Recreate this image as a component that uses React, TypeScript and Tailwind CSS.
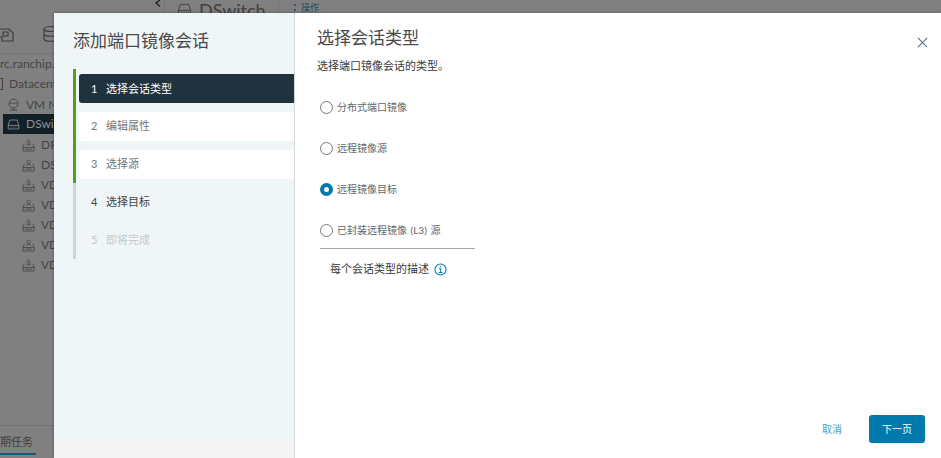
const FONT = "font-['Lato','Noto_Sans_CJK_SC',sans-serif]";

function SwitchIcon({ className }: { className?: string }) {
  return (
    <svg viewBox="0 0 16 16" fill="none" stroke="currentColor" strokeWidth="1" className={className} aria-hidden>
      <path d="M1.5 9 L3.5 2.5 H12.5 L14.5 9 V13.5 H1.5 Z" />
      <path d="M1.5 9 H14.5" />
      <path d="M4.5 11.2 H5.5 M7 11.2 H8 M9.5 11.2 H10.5 M12 11.2 H12.6" />
    </svg>
  );
}

function PortGroupIcon() {
  return (
    <svg viewBox="0 0 14 14" fill="none" stroke="currentColor" strokeWidth="0.9" className="h-[13px] w-[13px] shrink-0" aria-hidden>
      <circle cx="7" cy="3" r="1.8" />
      <path d="M4.5 7 C4.5 5.5 9.5 5.5 9.5 7" />
      <path d="M2.5 5 L1 9 V13 H13 V9 L11.5 5" />
      <path d="M1 9.2 H13 M3.5 11 H10.5" />
    </svg>
  );
}

function TreeRow({ label, selected, icon, indent }: { label: string; selected?: boolean; icon: React.ReactNode; indent: string }) {
  return (
    <div className={`flex h-5 items-center gap-[6px] text-[12px] whitespace-nowrap ${indent} ${selected ? "bg-[#132028] text-[#8b9296]" : "text-[#454545]"}`}>
      {icon}
      <span>{label}</span>
    </div>
  );
}

function Backdrop() {
  return (
    <div className="flex h-full w-full flex-col overflow-hidden bg-[#808080]">
      <div className="flex h-[15px] shrink-0">
        <div className="relative w-[165px] shrink-0 border-r border-[#767676]">
          <svg viewBox="0 0 8 8" fill="none" stroke="#222" strokeWidth="1.4" className="absolute top-0 left-[154px] h-2 w-2" aria-hidden>
            <path d="M6 0 L2 3 L6 6.5" />
          </svg>
        </div>
        <div className="flex w-[114px] shrink-0 items-center gap-[7px] border-r border-[#767676] pl-[12px] text-[#404040]">
          <SwitchIcon className="mt-1 h-[15px] w-[15px] shrink-0" />
          <span className="mt-1 text-[18px] leading-none">DSwitch</span>
        </div>
        <div className="flex items-center pl-[15px] text-[9px] text-[#1f4e66]">
          <div className="flex w-[7px] flex-col gap-[3px]">
            <span className="h-[2px] w-[2px] rounded-full bg-[#1f4e66]" />
            <span className="h-[2px] w-[2px] rounded-full bg-[#1f4e66]" />
          </div>
          <span>操作</span>
        </div>
      </div>
      <div className="flex h-[39px] w-[165px] shrink-0 items-center gap-[27px] border-b border-[#767676] text-[#3c3c3c]">
        <svg viewBox="0 0 18 18" fill="none" stroke="currentColor" strokeWidth="1.2" className="-ml-[3px] h-[18px] w-[18px] shrink-0" aria-hidden>
          <path d="M1 4 H12 L16 8 V16 H5 V12 H1 Z" />
          <path d="M6 7 H11 V11 H6 Z" />
        </svg>
        <svg viewBox="0 0 18 18" fill="none" stroke="currentColor" strokeWidth="1.2" className="h-[18px] w-[18px] shrink-0" aria-hidden>
          <ellipse cx="9" cy="4" rx="7" ry="2.5" />
          <path d="M2 4 V14 C2 17 16 17 16 14 V4 M2 9 C2 12 16 12 16 9" />
        </svg>
      </div>
      <div className="flex min-h-0 flex-1 flex-col">
        <div className="flex h-5 items-center text-[12px] whitespace-nowrap text-[#454545]">rc.ranchip.com</div>
        <TreeRow indent="" label="Datacenter" icon={<span className="h-3 w-[3px] shrink-0 border border-l-0 border-[#444]" />} />
        <TreeRow indent="pl-[7px] pt-[1px]" label="VM Network" icon={
          <svg viewBox="0 0 14 14" fill="none" stroke="currentColor" strokeWidth="1" className="h-[13px] w-[13px] shrink-0" aria-hidden>
            <circle cx="7" cy="6" r="4.8" />
            <path d="M2.5 5 C5 7 9 4 11.5 7 M7 11 V13 M3 13 H11" />
          </svg>
        } />
        <div className="ml-[3px]">
          <TreeRow indent="pl-[4px]" selected label="DSwitch" icon={<SwitchIcon className="h-[13px] w-[13px] shrink-0" />} />
        </div>
        <div className="flex flex-col pt-[1px]">
          {["DPortGroup", "DSwitch-1", "VDS-01", "VDS-02", "VDS-03", "VDS-04", "VDS-05"].map((n) => (
            <TreeRow key={n} indent="pl-[22px]" label={n} icon={<PortGroupIcon />} />
          ))}
        </div>
      </div>
      <div className="h-[33px] w-[54px] shrink-0 border-t border-[#747474]">
        <div className="flex h-[32px] flex-col justify-end">
          <span className="-ml-[11px] text-[11px] leading-[22px] whitespace-nowrap text-[#404040]">近期任务</span>
          <div className="h-[2px] w-[36px] bg-[#0b5c85]" />
          <div className="h-[3px]" />
        </div>
      </div>
    </div>
  );
}

const STEPS = [
  { n: 1, label: "选择会话类型", tone: "active" },
  { n: 2, label: "编辑属性", tone: "done" },
  { n: 3, label: "选择源", tone: "done" },
  { n: 4, label: "选择目标", tone: "next" },
  { n: 5, label: "即将完成", tone: "disabled" },
];

const OPTIONS = [
  { label: "分布式端口镜像" },
  { label: "远程镜像源" },
  { label: "远程镜像目标", checked: true },
  { label: "已封装远程镜像 (L3) 源" },
];

function Step({ n, label, tone }: { n: number; label: string; tone: string }) {
  const box =
    tone === "active"
      ? "rounded-l-[3px] bg-[#1f323d] pt-[1px] text-white"
      : tone === "done"
        ? "rounded-l-[3px] bg-white text-[#777]"
        : tone === "next"
          ? "text-[#444]"
          : "text-[#c4c8cb]";
  return (
    <div className={`flex h-[29px] items-center gap-[9px] pl-[12px] text-[11px] ${box}`}>
      <span className="w-[6px] text-[11px]">{n}</span>
      <span>{label}</span>
    </div>
  );
}

export default function App() {
  return (
    <div className={`relative h-[458px] w-[941px] overflow-hidden ${FONT}`}>
      <Backdrop />
      <div className="absolute top-[13px] right-0 bottom-0 left-[54px] flex bg-white shadow-[0_0_3px_rgba(0,0,0,0.35)]">
        <div className="flex w-[241px] shrink-0 flex-col border-r border-[#d5d9dc] bg-[#f0f5f8]">
          <div className="flex-1 pl-[19px]">
            <h2 className="mt-[16px] text-[17px] leading-[24px] font-normal text-[#4a4a4a]">添加端口镜像会话</h2>
            <div className="relative mt-[16px] flex flex-col gap-[9px] py-[5px] pl-[6px]">
              <div className="absolute top-0 left-0 h-[190px] w-[3px] bg-[#cfd6db]" />
              <div className="absolute top-0 left-0 h-[114px] w-[3px] bg-[#5a9a1e]" />
              {STEPS.map((s) => (
                <Step key={s.n} {...s} />
              ))}
            </div>
          </div>
          <div className="h-[18px] shrink-0 bg-[#f4f4f4]" />
        </div>

        <div className="flex min-w-0 flex-1 flex-col pr-[13px] pl-[22px]">
          <div className="flex items-start justify-between">
            <h3 className="mt-[13px] text-[17px] leading-[24px] font-normal text-[#4a4a4a]">选择会话类型</h3>
            <svg viewBox="0 0 12 12" fill="none" stroke="#56707f" strokeWidth="1.2" className="mt-[24px] h-[11px] w-[11px] shrink-0" aria-hidden>
              <path d="M1 1 L11 11 M11 1 L1 11" />
            </svg>
          </div>
          <p className="mt-[8px] text-[11px] leading-[16px] text-[#3a3a3a]">选择端口镜像会话的类型。</p>

          <div className="mt-[25px] flex w-[155px] flex-col gap-[25px] pl-[3px]">
            {OPTIONS.map((o) => (
              <label key={o.label} className="flex h-4 items-center gap-[4px] text-[10px] [word-spacing:1px] whitespace-nowrap text-[#666]">
                {o.checked ? (
                  <span className="flex h-[13px] w-[13px] shrink-0 items-center justify-center rounded-full bg-[#0079ad]">
                    <span className="h-[5px] w-[5px] rounded-full bg-white" />
                  </span>
                ) : (
                  <span className="h-[13px] w-[13px] shrink-0 rounded-full border border-[#777] bg-white" />
                )}
                {o.label}
              </label>
            ))}
          </div>
          <div className="mt-[10px] ml-[3px] w-[155px] border-t border-[#a8a8a8]" />
          <div className="mt-[12px] ml-[13px] flex items-center gap-[5px] text-[11px] text-[#3a3a3a]">
            <span>每个会话类型的描述</span>
            <svg viewBox="0 0 14 14" fill="none" stroke="#0079ad" strokeWidth="1.1" className="h-[13px] w-[13px]" aria-hidden>
              <circle cx="7" cy="7" r="6" />
              <path d="M5.4 6.2 H7.2 V10.2 M5.2 10.2 H9" />
              <path d="M7 3.4 V4.6" strokeWidth="1.4" />
            </svg>
          </div>

          <div className="mt-auto mr-[3px] mb-[15px] flex items-center justify-end gap-[27px]">
            <button type="button" className="text-[10px] text-[#4d9cc0]">取消</button>
            <button type="button" className="h-[28px] w-[56px] rounded-[3px] bg-[#0079ad] text-[10px] text-white">下一页</button>
          </div>
        </div>
      </div>
    </div>
  );
}
